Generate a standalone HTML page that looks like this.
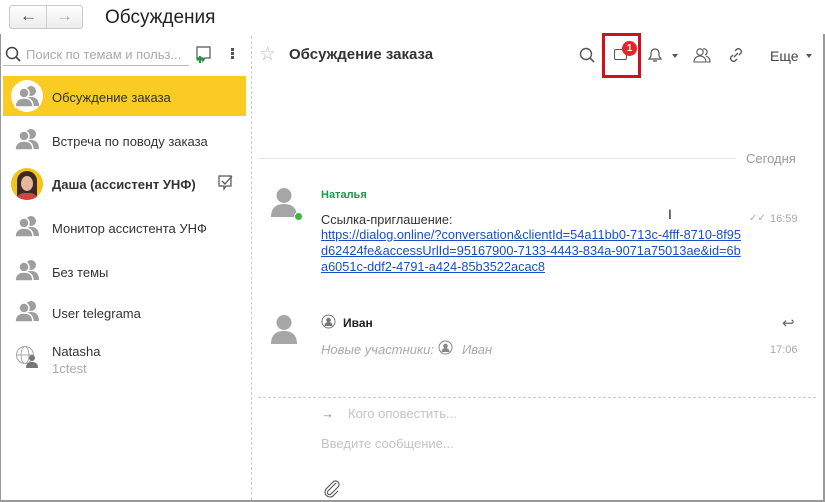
<!DOCTYPE html>
<html><head><meta charset="utf-8"><style>
*{margin:0;padding:0;box-sizing:border-box}
body{width:825px;height:502px;background:#fff;font-family:"Liberation Sans",Arial,sans-serif;position:relative;overflow:hidden;color:#333}
.a{position:absolute}
.t{font-size:13px;white-space:nowrap}
.g{color:#bbb}
</style></head><body>
<div class="a" style="left:0;top:34px;width:825px;height:468px;border-left:1px solid #999;border-bottom:2px solid #999;border-right:2px solid #999"></div>
<div class="a" style="left:9px;top:5px;width:74px;height:24px;border:1px solid #c8c8c8;border-radius:3px;background:linear-gradient(#fff,#ececec)"></div>
<div class="a" style="left:46px;top:6px;width:1px;height:22px;background:#ccc"></div>
<div class="a" style="left:20px;top:6px;font-size:17px;font-weight:bold;color:#444">&#8592;</div>
<div class="a" style="left:56px;top:6px;font-size:17px;font-weight:bold;color:#aaa">&#8594;</div>
<div class="a" style="left:105px;top:7px;font-size:19px;color:#222">Обсуждения</div>
<svg class="a" style="left:5px;top:46px" width="16" height="16"><circle cx="7" cy="7" r="5.5" fill="none" stroke="#444" stroke-width="1.5"/><line x1="11" y1="11" x2="15" y2="15" stroke="#444" stroke-width="1.6"/></svg>
<div class="a t g" style="left:26px;top:47px;color:#aaa">Поиск по темам и польз...</div>
<div class="a" style="left:3px;top:65px;width:186px;height:1px;background:#bbb"></div>
<svg class="a" style="left:194px;top:45px" width="20" height="20"><path d="M3 2h13v11h-5l-2 3v-3H3z" fill="none" stroke="#555" stroke-width="1.2"/><path d="M6 11v7M2.5 14.5h7" stroke="#1a9a3a" stroke-width="2"/></svg>
<div class="a" style="left:231px;top:48px;width:3px;height:3px;background:#555;box-shadow:0 4px #555,0 8px #555"></div>
<div class="a" style="left:3px;top:76px;width:243px;height:40px;background:#f9cb23"></div>
<div class="a" style="left:11px;top:80px;width:32px;height:32px;border-radius:50%;background:#fff"></div>
<svg class="a" style="left:14px;top:84px" width="28" height="24" viewBox="0 0 28 24"><g fill="#9e9e9e"><circle cx="17" cy="7" r="5"/><path d="M9 22c0-7 4-9 8-9s8 2 8 9z"/><circle cx="10" cy="9" r="5" stroke="#fff" stroke-width="1.5"/><path d="M1 23c0-7 4-9 9-9s9 2 9 9z" stroke="#fff" stroke-width="1.5"/></g></svg>
<div class="a t" style="left:52px;top:90px;color:#333">Обсуждение заказа</div>
<svg class="a" style="left:14px;top:127px" width="28" height="24" viewBox="0 0 28 24"><g fill="#9e9e9e"><circle cx="17" cy="7" r="5"/><path d="M9 22c0-7 4-9 8-9s8 2 8 9z"/><circle cx="10" cy="9" r="5" stroke="#fff" stroke-width="1.5"/><path d="M1 23c0-7 4-9 9-9s9 2 9 9z" stroke="#fff" stroke-width="1.5"/></g></svg>
<div class="a t" style="left:52px;top:134px">Встреча по поводу заказа</div>
<div class="a" style="left:11px;top:168px;width:32px;height:32px;border-radius:50%;background:#f2c41c;overflow:hidden"><div class="a" style="left:6px;top:3px;width:20px;height:28px;border-radius:10px 10px 4px 4px;background:#3a2a22"></div><div class="a" style="left:10px;top:8px;width:12px;height:15px;border-radius:50%;background:#e8b59e"></div><div class="a" style="left:5px;top:25px;width:22px;height:10px;border-radius:8px 8px 0 0;background:#c44"></div></div>
<div class="a t" style="left:52px;top:177px;font-weight:bold;color:#333">Даша (ассистент УНФ)</div>
<svg class="a" style="left:217px;top:174px" width="18" height="18"><path d="M2 2h12v10H9l-2 3v-3H2z" fill="none" stroke="#555" stroke-width="1.2"/><path d="M5 7l3 3 7-8" fill="none" stroke="#555" stroke-width="1.3"/></svg>
<svg class="a" style="left:14px;top:214px" width="28" height="24" viewBox="0 0 28 24"><g fill="#9e9e9e"><circle cx="17" cy="7" r="5"/><path d="M9 22c0-7 4-9 8-9s8 2 8 9z"/><circle cx="10" cy="9" r="5" stroke="#fff" stroke-width="1.5"/><path d="M1 23c0-7 4-9 9-9s9 2 9 9z" stroke="#fff" stroke-width="1.5"/></g></svg>
<div class="a t" style="left:52px;top:221px">Монитор ассистента УНФ</div>
<svg class="a" style="left:14px;top:258px" width="28" height="24" viewBox="0 0 28 24"><g fill="#9e9e9e"><circle cx="17" cy="7" r="5"/><path d="M9 22c0-7 4-9 8-9s8 2 8 9z"/><circle cx="10" cy="9" r="5" stroke="#fff" stroke-width="1.5"/><path d="M1 23c0-7 4-9 9-9s9 2 9 9z" stroke="#fff" stroke-width="1.5"/></g></svg>
<div class="a t" style="left:52px;top:265px">Без темы</div>
<svg class="a" style="left:14px;top:299px" width="28" height="24" viewBox="0 0 28 24"><g fill="#9e9e9e"><circle cx="17" cy="7" r="5"/><path d="M9 22c0-7 4-9 8-9s8 2 8 9z"/><circle cx="10" cy="9" r="5" stroke="#fff" stroke-width="1.5"/><path d="M1 23c0-7 4-9 9-9s9 2 9 9z" stroke="#fff" stroke-width="1.5"/></g></svg>
<div class="a t" style="left:52px;top:306px">User telegrama</div>
<svg class="a" style="left:15px;top:345px" width="24" height="24"><circle cx="10" cy="10" r="8.5" fill="none" stroke="#aaa" stroke-width="1.1"/><ellipse cx="10" cy="10" rx="4" ry="8.5" fill="none" stroke="#aaa"/><line x1="1.5" y1="10" x2="18.5" y2="10" stroke="#aaa"/><circle cx="17" cy="13" r="3" fill="#777"/><path d="M11 23c0-5 3-6 6-6s6 1 6 6z" fill="#777"/></svg>
<div class="a t" style="left:52px;top:344px">Natasha</div>
<div class="a t" style="left:52px;top:361px;color:#aaa">1ctest</div>
<div class="a" style="left:251px;top:36px;height:464px;border-left:1px dashed #ccc"></div>
<div class="a" style="left:259px;top:43px;font-size:19px;color:#bbb">☆</div>
<div class="a" style="left:289px;top:46px;font-size:15px;font-weight:bold;color:#333">Обсуждение заказа</div>
<svg class="a" style="left:579px;top:47px" width="17" height="17"><circle cx="7" cy="7" r="5.5" fill="none" stroke="#555" stroke-width="1.4"/><line x1="11" y1="11" x2="15" y2="15" stroke="#555" stroke-width="1.6"/></svg>
<div class="a" style="left:602px;top:33px;width:39px;height:45px;border:3px solid #d0101a"></div>
<div class="a" style="left:614px;top:49px;width:13px;height:11px;border:1.3px solid #555;border-radius:2px"></div>
<div class="a" style="left:622px;top:41px;width:15px;height:15px;border-radius:50%;background:#e8232a;color:#fff;font-size:10px;font-weight:bold;text-align:center;line-height:15px">1</div>
<svg class="a" style="left:646px;top:46px" width="18" height="18"><path d="M3 13h12l-2-3V7a4 4 0 0 0-8 0v3z" fill="none" stroke="#555" stroke-width="1.2"/><path d="M7 15h4" stroke="#555" stroke-width="1.3"/></svg>
<div class="a" style="left:672px;top:54px;border:3px solid transparent;border-top:4px solid #555"></div>
<svg class="a" style="left:692px;top:46px" width="20" height="18"><circle cx="8" cy="6" r="3.2" fill="none" stroke="#555" stroke-width="1.1"/><path d="M2 16c0-4 3-6 6-6s6 2 6 6z" fill="none" stroke="#555" stroke-width="1.1"/><path d="M11 3a3 3 0 0 1 2 6M14 10c2 1 4 2 4 6h-3" fill="none" stroke="#555" stroke-width="1.1"/></svg>
<svg class="a" style="left:727px;top:46px" width="18" height="18"><path d="M7 11l4-4M8 5l2-2a3 3 0 0 1 4 4l-2 2M10 13l-2 2a3 3 0 0 1-4-4l2-2" fill="none" stroke="#555" stroke-width="1.3"/></svg>
<div class="a t" style="left:770px;top:48px;font-size:14px;color:#444">Еще</div>
<div class="a" style="left:806px;top:54px;border:3px solid transparent;border-top:4px solid #555"></div>
<div class="a" style="left:258px;top:158px;width:478px;height:1px;background:#e6e6e6"></div>
<div class="a t" style="left:746px;top:151px;color:#999">Сегодня</div>
<svg class="a" style="left:270px;top:187px" width="28" height="30"><circle cx="14" cy="8.5" r="7.5" fill="#a6a6a6"/><path d="M1 30c0-10 6-13 13-13s13 3 13 13z" fill="#a6a6a6"/></svg>
<div class="a" style="left:295px;top:213px;width:7px;height:7px;border-radius:50%;background:#3cb83c;box-shadow:0 0 0 1px #fff"></div>
<div class="a" style="left:321px;top:189px;font-size:11px;font-weight:bold;color:#1a9a4a">Наталья</div>
<div class="a" style="left:321px;top:212px;font-size:12.75px;white-space:nowrap;color:#333">Ссылка-приглашение:</div>
<div class="a" style="left:321px;top:227px;font-size:12.75px;line-height:16px;color:#1a4fc0;text-decoration:underline;white-space:pre">https://dialog.online/?conversation&amp;clientId=54a11bb0-713c-4fff-8710-8f95
d62424fe&amp;accessUrlId=95167900-7133-4443-834a-9071a75013ae&amp;id=6b
a6051c-ddf2-4791-a424-85b3522acac8</div>
<div class="a" style="left:668px;top:206px;font-size:14px;color:#222">I</div>
<div class="a" style="left:749px;top:213px;font-size:10px;color:#aaa">✓✓</div>
<div class="a" style="left:770px;top:213px;font-size:11px;color:#aaa">16:59</div>
<svg class="a" style="left:270px;top:314px" width="28" height="30"><circle cx="14" cy="8.5" r="7.5" fill="#a6a6a6"/><path d="M1 30c0-10 6-13 13-13s13 3 13 13z" fill="#a6a6a6"/></svg>
<svg class="a" style="left:321px;top:314px" width="15" height="15"><circle cx="7.5" cy="7.5" r="6.5" fill="none" stroke="#777"/><circle cx="7.5" cy="6" r="2.3" fill="#777"/><path d="M3.5 12c0-3 2-4 4-4s4 1 4 4z" fill="#777"/></svg>
<div class="a" style="left:343px;top:316px;font-size:12px;font-weight:bold;color:#222">Иван</div>
<div class="a" style="left:782px;top:314px;font-size:15px;color:#666">↩</div>
<div class="a t" style="left:321px;top:342px;color:#aaa;font-style:italic">Новые участники:</div>
<svg class="a" style="left:438px;top:340px" width="15" height="15"><circle cx="7.5" cy="7.5" r="6.5" fill="none" stroke="#888"/><circle cx="7.5" cy="6" r="2.3" fill="#888"/><path d="M3.5 12c0-3 2-4 4-4s4 1 4 4z" fill="#888"/></svg>
<div class="a t" style="left:462px;top:342px;color:#aaa;font-style:italic">Иван</div>
<div class="a" style="left:770px;top:344px;font-size:11px;color:#aaa">17:06</div>
<div class="a" style="left:258px;top:397px;width:558px;border-top:1px dashed #ccc"></div>
<div class="a t" style="left:321px;top:406px;color:#888">→</div>
<div class="a t" style="left:348px;top:406px;color:#c4c4c4">Кого оповестить...</div>
<div class="a t" style="left:321px;top:436px;color:#c4c4c4">Введите сообщение...</div>
<svg class="a" style="left:322px;top:480px" width="20" height="18"><path d="M14 3l-8 8a2 2 0 0 0 3 3l7-7a3.5 3.5 0 0 0-5-5L4 9a5 5 0 0 0 7 7l5-5" fill="none" stroke="#555" stroke-width="1.1"/></svg>
</body></html>
